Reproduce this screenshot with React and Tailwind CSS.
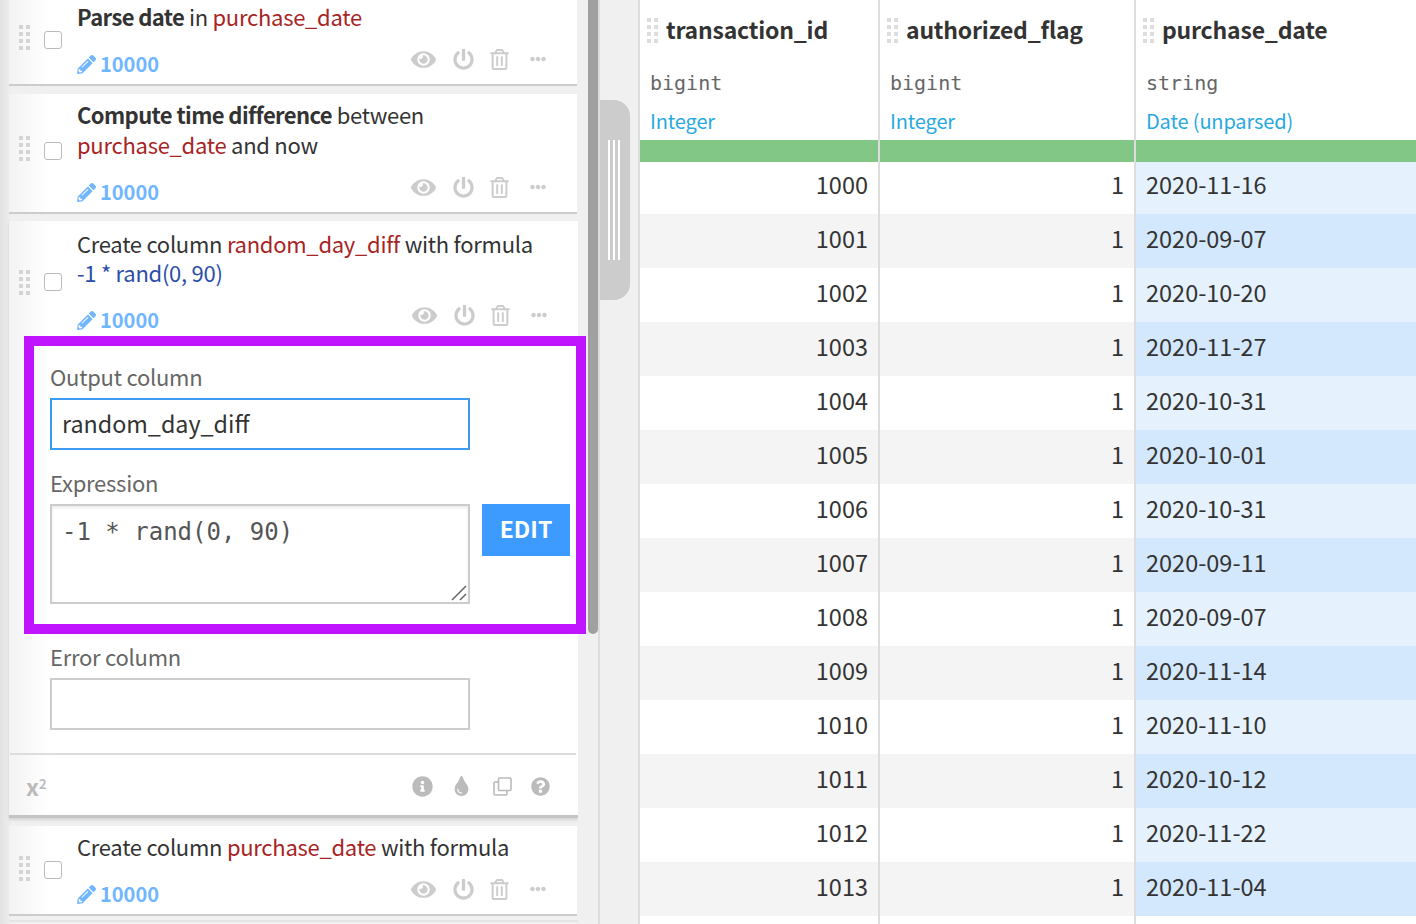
import { FaEye, FaPencilAlt, FaPowerOff, FaRegTrashAlt, FaEllipsisH, FaInfoCircle, FaTint, FaQuestionCircle } from 'react-icons/fa';

const rows = [
  [1000, '2020-11-16'],
  [1001, '2020-09-07'],
  [1002, '2020-10-20'],
  [1003, '2020-11-27'],
  [1004, '2020-10-31'],
  [1005, '2020-10-01'],
  [1006, '2020-10-31'],
  [1007, '2020-09-11'],
  [1008, '2020-09-07'],
  [1009, '2020-11-14'],
  [1010, '2020-11-10'],
  [1011, '2020-10-12'],
  [1012, '2020-11-22'],
  [1013, '2020-11-04'],
];

function Grip({ className }) {
  return (
    <div className={`grid grid-cols-2 gap-x-[3px] gap-y-[3px] w-[11px] ${className}`}>
      {[0, 1, 2, 3, 4, 5, 6, 7].map((i) => (
        <span key={i} className="w-1 h-1 bg-[#d4d4d4]" />
      ))}
    </div>
  );
}

function Red({ children }) {
  return <span className="text-[#a82424]">{children}</span>;
}

function Bold({ children }) {
  return <b className="font-semibold tracking-[-0.6px]">{children}</b>;
}

function StepFooter() {
  return (
    <div className="flex items-center justify-between h-[28px]">
      <div className="flex items-center gap-[4px] text-[#70b6ff] font-bold text-[20px]">
        <FaPencilAlt className="w-[19px] h-[19px]" />
        <span>10000</span>
      </div>
      <div className="flex items-center text-[#cccccc] mr-[31px] mt-[-10px]">
        <FaEye className="w-[25px] h-[25px]" />
        <FaPowerOff className="w-[21px] h-[21px] ml-[17px]" />
        <FaRegTrashAlt className="w-[19px] h-[21px] ml-[16px]" />
        <FaEllipsisH className="w-[16px] h-[16px] ml-[21px]" />
      </div>
    </div>
  );
}

function Step({ children, className, gripTop, boxTop, border = true }) {
  return (
    <div className={`flex bg-gradient-to-r from-[#f3f3f3] to-white to-[40px] ${border ? 'border-b-2 border-[#cccccc]' : ''} ${className}`}>
      <div className="w-[68px] shrink-0 relative">
        <Grip className={`absolute left-[10px] ${gripTop}`} />
        <div className={`absolute left-[35px] w-[18px] h-[18px] border border-[#bbbbbb] rounded-[3px] bg-white ${boxTop}`} />
      </div>
      <div className="flex-1 min-w-0">{children}</div>
    </div>
  );
}

function ColHead({ name, storage, meaning, width }) {
  return (
    <div className={`shrink-0 h-full ${width}`}>
      <div className="flex items-center h-[58px] pl-[7px] gap-[8px] text-[#333333] font-semibold text-[23px] tracking-[-0.2px]">
        <Grip className="[&>span]:bg-[#dddddd] mt-[3px]" />
        <span>{name}</span>
      </div>
      <div className="pl-[10px] mt-[5px] h-[40px] flex items-center font-['DejaVu_Sans_Mono',monospace] text-[#666666] text-[20px]">{storage}</div>
      <div className="pl-[10px] h-[36px] flex items-center text-[#29a9e0] text-[20px] tracking-[-0.15px]">{meaning}</div>
    </div>
  );
}

export default function App() {
  return (
    <div className="w-[1416px] h-[924px] overflow-hidden flex bg-[#f0f0f0] font-['Noto_Sans_CJK_SC','Liberation_Sans',sans-serif] text-[#333333] relative">
      {/* script panel */}
      <div className="w-[578px] shrink-0 h-full overflow-hidden bg-gradient-to-r from-[#e2e2e2] to-[#f0f0f0] to-[12px] pl-[9px] flex flex-col">
        <Step className="h-[86px] w-[568px] pt-[1px] shrink-0" gripTop="top-[24px]" boxTop="top-[30px]">
          <div className="text-[22px] tracking-[-0.27px] leading-[30px] h-[49px]">
            <Bold>Parse date</Bold> in <Red>purchase_date</Red>
          </div>
          <StepFooter />
        </Step>
        <Step className="h-[120px] w-[568px] mt-[8px] pt-[5px] shrink-0" gripTop="top-[37px]" boxTop="top-[43px]">
          <div className="text-[22px] tracking-[-0.27px] leading-[30px] h-[79px]">
            <Bold>Compute time difference</Bold> between<br />
            <Red>purchase_date</Red> and now
          </div>
          <StepFooter />
        </Step>

        {/* open step */}
        <div className="mt-[7px] h-[597px] w-[569px] shrink-0 bg-gradient-to-r from-[#f3f3f3] to-white to-[40px] border-b-[3px] border-[#c4c4c4] shadow-[0_2px_3px_rgba(0,0,0,0.12)] flex flex-col">
          <Step className="h-[116px] pt-[8px] bg-none" gripTop="top-[41px]" boxTop="top-[44px]" border={false}>
            <div className="text-[22px] tracking-[-0.27px] leading-[29px] h-[77px] whitespace-nowrap">
              Create column <Red>random_day_diff</Red> with formula<br />
              <span className="text-[#2b4ea8]">-1 * rand(0, 90)</span>
            </div>
            <StepFooter />
          </Step>
          <div className="pl-[41px] pr-[8px] pt-[24px] flex-1">
            <div className="text-[#666666] text-[22px] tracking-[-0.25px] leading-[30px]">Output column</div>
            <div className="mt-[7px] w-[420px] h-[52px] border-2 border-[#3d9bf0] bg-white pl-[10px] pb-[2px] flex items-center text-[23.3px] text-[#333333]">random_day_diff</div>
            <div className="mt-[17px] text-[#666666] text-[22px] tracking-[-0.25px] leading-[30px]">Expression</div>
            <div className="mt-[7px] flex items-start gap-[12px]">
              <div className="relative w-[420px] h-[100px] border-2 border-[#cccccc] bg-white shadow-[inset_0_2px_3px_rgba(0,0,0,0.08)] pl-[10px] pt-[8px] font-['DejaVu_Sans_Mono',monospace] text-[24px] leading-[36px] text-[#555555]">
                -1 * rand(0, 90)
                <svg className="absolute right-[1px] bottom-[1px]" width="16" height="16" viewBox="0 0 16 16" stroke="#666666" strokeWidth="1.5">
                  <path d="M1 15 L15 1 M9 15 L15 9" />
                </svg>
              </div>
              <div className="w-[88px] h-[52px] bg-[#3d9bff] text-white font-semibold text-[23px] pb-[4px] flex items-center justify-center">EDIT</div>
            </div>
            <div className="mt-[37px] text-[#666666] text-[22px] tracking-[-0.25px] leading-[30px]">Error column</div>
            <div className="mt-[7px] w-[420px] h-[52px] border-2 border-[#cccccc] bg-white" />
          </div>
          <div className="ml-[1px] mr-[2px] h-[62px] border-t-2 border-[#dddddd] flex items-center justify-between text-[#bbbbbb] pl-[16px] pr-[26px] pt-[2px] shrink-0">
            <span className="font-bold text-[23px] leading-none">x<sup className="text-[13px] font-semibold">2</sup></span>
            <div className="flex items-center">
              <FaInfoCircle className="w-[21px] h-[21px]" />
              <FaTint className="w-[17px] h-[20px] ml-[20px]" />
              <svg className="ml-[23px]" width="19" height="19" viewBox="0 0 19 19" fill="none" stroke="currentColor" strokeWidth="1.6">
                <rect x="5.5" y="1" width="12.5" height="12.5" rx="1" />
                <path d="M5.5 5H2a1 1 0 0 0-1 1v11a1 1 0 0 0 1 1h11a1 1 0 0 0 1-1v-3.5" />
              </svg>
              <FaQuestionCircle className="w-[19px] h-[19px] ml-[19px]" />
            </div>
          </div>
        </div>

        <Step className="h-[90px] w-[568px] mt-[8px] pt-[5px] shrink-0" gripTop="top-[25px]" boxTop="top-[30px]">
          <div className="text-[22px] tracking-[-0.27px] leading-[30px] h-[49px]">
            Create column <Red>purchase_date</Red> with formula
          </div>
          <StepFooter />
        </Step>
        <div className="mt-[4px] h-[2px] shrink-0 bg-[#e4e4e4]" />
      </div>

      {/* scrollbar */}
      <div className="w-[22px] shrink-0 h-full bg-[#f0f0f0] border-r-2 border-[#dddddd] pl-[10px]">
        <div className="w-[10px] h-[634px] bg-[#a0a0a0] rounded-b-[5px]" />
      </div>

      {/* splitter */}
      <div className="w-[40px] shrink-0 h-full pt-[100px] border-r-2 border-[#dddddd]">
        <div className="w-[30px] h-[200px] bg-[#cccccc] rounded-r-[16px] flex items-center justify-center">
          <div className="flex h-[120px] w-[12px] ml-[-2px] border-x-2 border-white justify-center">
            <div className="w-[2px] h-full bg-white" />
          </div>
        </div>
      </div>

      {/* data table */}
      <div className="flex-1 min-w-0 h-full bg-white relative flex flex-col">
        <div className="flex h-[140px] shrink-0">
          <ColHead name="transaction_id" storage="bigint" meaning="Integer" width="w-[240px] border-r-2 border-[#dddddd]" />
          <ColHead name="authorized_flag" storage="bigint" meaning="Integer" width="w-[256px] border-r-2 border-[#dddddd]" />
          <ColHead name="purchase_date" storage="string" meaning="Date (unparsed)" width="flex-1" />
        </div>
        <div className="flex h-[22px] shrink-0 bg-[#82c785]">
          <div className="w-[240px] border-r-2 border-[#dddddd]" />
          <div className="w-[256px] border-r-2 border-[#dddddd]" />
        </div>
        {rows.map(([id, date], i) => (
          <div key={id} className={`flex shrink-0 text-[23.5px] text-[#333333] ${i === 0 ? 'h-[52px]' : 'h-[54px]'} ${i % 2 ? 'bg-[#f4f4f4]' : 'bg-white'}`}>
            <div className={`w-[240px] border-r-2 border-[#dddddd] flex items-center justify-end pr-[10px] ${i === 0 ? 'pb-[6px]' : 'pb-[4px]'}`}>{id}</div>
            <div className={`w-[256px] border-r-2 border-[#dddddd] flex items-center justify-end pr-[10px] ${i === 0 ? 'pb-[6px]' : 'pb-[4px]'}`}>1</div>
            <div className={`flex-1 flex items-center pl-[10px] ${i === 0 ? 'pb-[6px]' : 'pb-[4px]'} ${i % 2 ? 'bg-[#d3e8fc]' : 'bg-[#e5f1fd]'}`}>{date}</div>
          </div>
        ))}
        <div className="flex flex-1">
          <div className="w-[240px] border-r-2 border-[#dddddd]" />
          <div className="w-[256px] border-r-2 border-[#dddddd]" />
        </div>
      </div>

      {/* highlight annotation */}
      <div className="absolute left-[24px] top-[336px] w-[562px] h-[298px] border-[10px] border-[#c013ff] pointer-events-none" />
    </div>
  );
}
